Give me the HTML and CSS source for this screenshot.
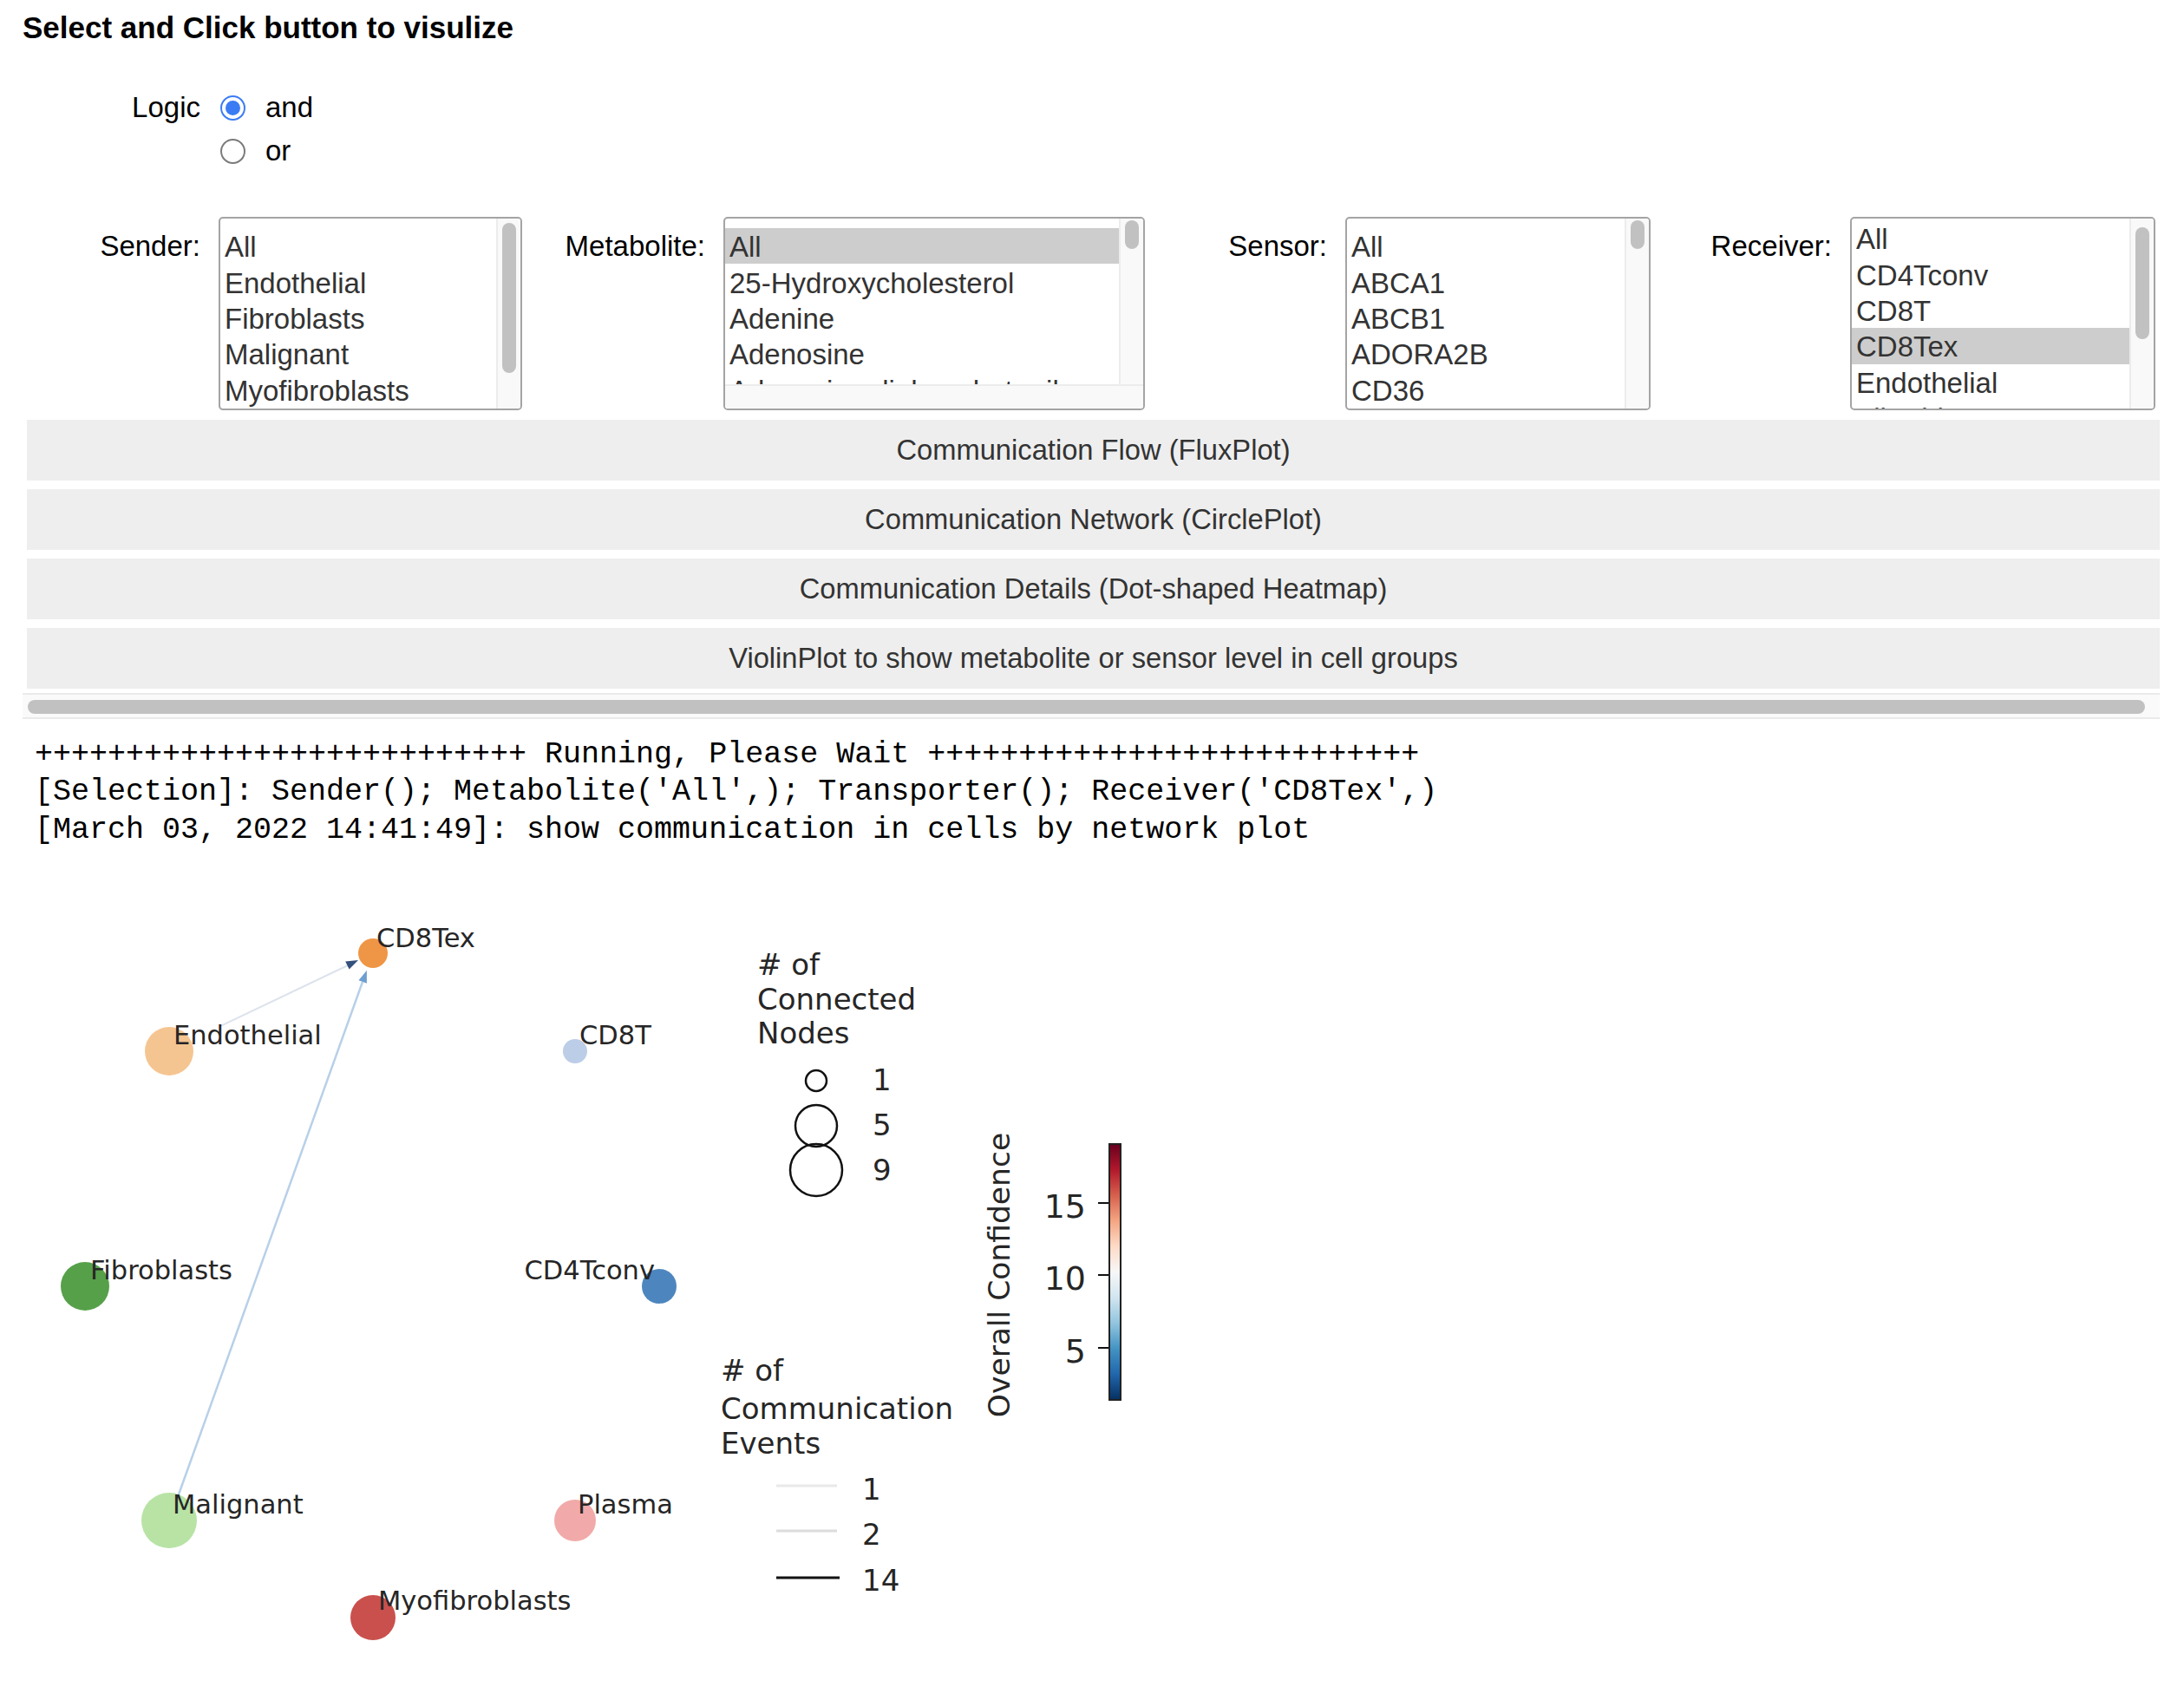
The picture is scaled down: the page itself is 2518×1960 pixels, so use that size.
FILE: index.html
```html
<!DOCTYPE html>
<html>
<head>
<meta charset="utf-8">
<link rel="stylesheet" href="styles.css">
</head>
<body>
<h1 class="title">Select and Click button to visulize</h1>

<div class="logic">
  <div class="logic-desc">Logic</div>
  <div class="options">
    <div class="opt"><span class="radio checked"><span class="dot"></span></span><span class="opt-text">and</span></div>
    <div class="opt"><span class="radio"></span><span class="opt-text">or</span></div>
  </div>
</div>

<div class="selects">
  <div class="group">
    <div class="glabel w1">Sender:</div>
    <div class="lb lb-sender">
      <div class="lb-main">
        <div class="lb-items">
          <div class="item">All</div>
          <div class="item">Endothelial</div>
          <div class="item">Fibroblasts</div>
          <div class="item">Malignant</div>
          <div class="item">Myofibroblasts</div>
          <div class="item">Plasma</div>
        </div>
        <div class="vbar"><div class="vthumb t-sender"></div></div>
      </div>
    </div>
  </div>
  <div class="group">
    <div class="glabel w2">Metabolite:</div>
    <div class="lb lb-metab">
      <div class="lb-main">
        <div class="lb-items">
          <div class="item sel">All</div>
          <div class="item">25-Hydroxycholesterol</div>
          <div class="item">Adenine</div>
          <div class="item">Adenosine</div>
          <div class="item">Adenosine diphosphate ribose</div>
        </div>
        <div class="vbar"><div class="vthumb t-short"></div></div>
      </div>
      <div class="hbar"></div>
    </div>
  </div>
  <div class="group">
    <div class="glabel w3">Sensor:</div>
    <div class="lb lb-sensor">
      <div class="lb-main">
        <div class="lb-items">
          <div class="item">All</div>
          <div class="item">ABCA1</div>
          <div class="item">ABCB1</div>
          <div class="item">ADORA2B</div>
          <div class="item">CD36</div>
          <div class="item">CD38</div>
        </div>
        <div class="vbar"><div class="vthumb t-short"></div></div>
      </div>
    </div>
  </div>
  <div class="group">
    <div class="glabel w4">Receiver:</div>
    <div class="lb lb-receiver">
      <div class="lb-main">
        <div class="lb-items scrolled">
          <div class="item">All</div>
          <div class="item">CD4Tconv</div>
          <div class="item">CD8T</div>
          <div class="item sel">CD8Tex</div>
          <div class="item">Endothelial</div>
          <div class="item">Fibroblasts</div>
        </div>
        <div class="vbar"><div class="vthumb t-receiver"></div></div>
      </div>
    </div>
  </div>
</div>

<div class="buttons">
  <div class="btn">Communication Flow (FluxPlot)</div>
  <div class="btn">Communication Network (CirclePlot)</div>
  <div class="btn">Communication Details (Dot-shaped Heatmap)</div>
  <div class="btn">ViolinPlot to show metabolite or sensor level in cell groups</div>
</div>

<div class="hscroll"><div class="hthumb"></div></div>

<pre class="out">+++++++++++++++++++++++++++ Running, Please Wait +++++++++++++++++++++++++++
[Selection]: Sender(); Metabolite('All',); Transporter(); Receiver('CD8Tex',)
[March 03, 2022 14:41:49]: show communication in cells by network plot</pre>

<svg class="plot" width="1400" height="920" viewBox="0 1040 1400 920" xmlns="http://www.w3.org/2000/svg">
  <defs>
    <linearGradient id="rdbu" x1="0" y1="1" x2="0" y2="0">
      <stop offset="0" stop-color="#053061"/>
      <stop offset="0.1" stop-color="#2166ac"/>
      <stop offset="0.2" stop-color="#4393c3"/>
      <stop offset="0.3" stop-color="#92c5de"/>
      <stop offset="0.4" stop-color="#d1e5f0"/>
      <stop offset="0.5" stop-color="#f7f7f7"/>
      <stop offset="0.6" stop-color="#fddbc7"/>
      <stop offset="0.7" stop-color="#f4a582"/>
      <stop offset="0.8" stop-color="#d6604d"/>
      <stop offset="0.9" stop-color="#b2182b"/>
      <stop offset="1" stop-color="#67001f"/>
    </linearGradient>
  </defs>

  <!-- edges -->
  <line x1="254" y1="1183" x2="401" y2="1113" stroke="#dde3ec" stroke-width="2"/>
  <polygon points="413,1107 402.6,1117.6 398.2,1108.6" fill="#34507c"/>
  <line x1="206" y1="1723" x2="418" y2="1132" stroke="#b8d0e8" stroke-width="2.5"/>
  <polygon points="422.9,1118.8 422.9,1133.7 413.5,1130.3" fill="#6f9fd0"/>

  <!-- nodes -->
  <g class="nodes">
    <circle cx="430" cy="1099" r="17" fill="#ef9646"/>
    <circle cx="195" cy="1212" r="28" fill="#f5c591"/>
    <circle cx="663" cy="1212" r="14" fill="#bccde8"/>
    <circle cx="98" cy="1483" r="28" fill="#56a049"/>
    <circle cx="760" cy="1483" r="20" fill="#4d86be"/>
    <circle cx="195" cy="1753" r="32" fill="#b8e3a5"/>
    <circle cx="663" cy="1753" r="24" fill="#f1aaa9"/>
    <circle cx="430" cy="1865" r="26" fill="#c9504d"/>
  </g>

  <!-- node labels -->
  <g class="nlabel">
    <text x="434" y="1092">CD8Tex</text>
    <text x="200" y="1204">Endothelial</text>
    <text x="668" y="1204">CD8T</text>
    <text x="104" y="1475">Fibroblasts</text>
    <text x="755" y="1475" text-anchor="end">CD4Tconv</text>
    <text x="199" y="1745">Malignant</text>
    <text x="666" y="1745">Plasma</text>
    <text x="436" y="1856">Myofibroblasts</text>
  </g>

  <!-- node size legend -->
  <g class="leg">
    <text x="873" y="1124"># of</text>
    <text x="873" y="1164">Connected</text>
    <text x="873" y="1203">Nodes</text>
    <text x="1006" y="1257">1</text>
    <text x="1006" y="1309">5</text>
    <text x="1006" y="1361">9</text>
  </g>
  <circle cx="941" cy="1246" r="12" fill="none" stroke="#111" stroke-width="2.5"/>
  <circle cx="941" cy="1298" r="24" fill="none" stroke="#111" stroke-width="2.5"/>
  <circle cx="941" cy="1349" r="30" fill="none" stroke="#111" stroke-width="2.5"/>

  <!-- edge legend -->
  <g class="leg">
    <text x="831" y="1592"># of</text>
    <text x="831" y="1636">Communication</text>
    <text x="831" y="1676">Events</text>
    <text x="994" y="1729">1</text>
    <text x="994" y="1781">2</text>
    <text x="994" y="1834">14</text>
  </g>
  <line x1="895" y1="1713" x2="965" y2="1713" stroke="#e9e9e9" stroke-width="3"/>
  <line x1="895" y1="1765" x2="965" y2="1765" stroke="#dcdcdc" stroke-width="3"/>
  <line x1="895" y1="1819" x2="968" y2="1819" stroke="#111" stroke-width="3"/>

  <!-- colorbar -->
  <rect x="1279" y="1319" width="13" height="295" fill="url(#rdbu)" stroke="#222" stroke-width="2"/>
  <line x1="1266" y1="1387" x2="1278" y2="1387" stroke="#111" stroke-width="2"/>
  <line x1="1266" y1="1470" x2="1278" y2="1470" stroke="#111" stroke-width="2"/>
  <line x1="1266" y1="1554" x2="1278" y2="1554" stroke="#111" stroke-width="2"/>
  <g class="ticks">
    <text x="1252" y="1404">15</text>
    <text x="1252" y="1487">10</text>
    <text x="1252" y="1571">5</text>
  </g>
  <text class="cbtitle" transform="translate(1164,1470) rotate(-90)">Overall Confidence</text>
</svg>
</body>
</html>
```

FILE: styles.css
```css
html, body {
  margin: 0;
  padding: 0;
  background: #ffffff;
  overflow: hidden;
}

body {
  font-family: "Liberation Sans", Arial, Helvetica, sans-serif;
  color: #000;
  width: 2518px;
  height: 1960px;
}

.title {
  margin: 0;
  padding: 12px 0 0 26px;
  font-size: 35px;
  line-height: 40px;
  font-weight: bold;
}

/* Logic radio group */
.logic {
  display: flex;
  margin-top: 47px;
}

.logic-desc {
  width: 231px;
  text-align: right;
  font-size: 33px;
  line-height: 50px;
}

.options {
  display: flex;
  flex-direction: column;
  margin-left: 23px;
}

.opt {
  display: flex;
  align-items: center;
  height: 50px;
  font-size: 33px;
}

.radio {
  box-sizing: border-box;
  width: 29px;
  height: 29px;
  border-radius: 50%;
  border: 2px solid #7b7b7b;
  display: flex;
  align-items: center;
  justify-content: center;
  background: #fff;
}

.radio.checked {
  border: 2.5px solid #3b7cf4;
}

.dot {
  width: 17px;
  height: 17px;
  border-radius: 50%;
  background: #3b7cf4;
}

.opt-text {
  margin-left: 23px;
  line-height: 50px;
}

/* select multiple row */
.selects {
  display: flex;
  margin-top: 51px;
  padding-left: 26px;
}

.group {
  display: flex;
}

.glabel {
  box-sizing: border-box;
  text-align: right;
  font-size: 33px;
  padding-top: 16.2px;
  line-height: 36.8px;
  margin-right: 20px;
  padding-right: 1px;
}

.w1 { width: 206px; }
.w2 { width: 212px; }
.w3 { width: 211px; }
.w4 { width: 210px; }

.lb {
  box-sizing: border-box;
  height: 223px;
  border: 2px solid #a4a4a4;
  border-radius: 5px;
  overflow: hidden;
  display: flex;
  flex-direction: column;
  background: #fff;
}

.lb-sender { width: 350px; }
.lb-metab { width: 486px; }
.lb-sensor { width: 352px; }
.lb-receiver { width: 352px; }

.lb-main {
  flex: 1;
  display: flex;
  min-height: 0;
}

.lb-items {
  flex: 1;
  padding-top: 11px;
  overflow: hidden;
}

.lb-items.scrolled {
  padding-top: 2px;
}

.item {
  box-sizing: border-box;
  height: 41.4px;
  padding: 4.2px 0 0 5px;
  line-height: 36.8px;
  font-size: 33px;
  color: #333;
  white-space: nowrap;
}

.item.sel {
  background: #cdcdcd;
}

.vbar {
  box-sizing: border-box;
  width: 28px;
  background: #f9f9f9;
  border-left: 2px solid #ececec;
  display: flex;
  flex-direction: column;
  align-items: center;
}

.vthumb {
  width: 16px;
  border-radius: 8px;
  background: #c1c1c1;
}

.t-sender { margin-top: 5px; height: 173px; }
.t-short { margin-top: 2px; height: 33px; }
.t-receiver { margin-top: 10px; height: 129px; }

.hbar {
  box-sizing: border-box;
  height: 28px;
  background: #f9f9f9;
  border-top: 2px solid #ececec;
}

/* buttons */
.buttons {
  margin-top: 11px;
  padding-left: 31px;
}

.btn {
  width: 2459px;
  height: 70px;
  margin-bottom: 10px;
  background: #eeeeee;
  display: flex;
  align-items: center;
  justify-content: center;
  font-size: 32.7px;
  color: #333;
}

.btn:last-child {
  margin-bottom: 0;
}

/* horizontal scrollbar of output area */
.hscroll {
  box-sizing: border-box;
  margin: 5px 0 0 26px;
  width: 2464px;
  height: 30px;
  border-top: 2px solid #eaeaea;
  border-bottom: 2px solid #eaeaea;
  background: #fafafa;
  padding: 6px 0 0 6px;
}

.hthumb {
  width: 2441px;
  height: 16px;
  border-radius: 8px;
  background: #c1c1c1;
}

/* text output */
.out {
  margin: 20px 0 0 40px;
  font-family: "Liberation Mono", "Courier New", monospace;
  font-size: 35px;
  line-height: 43.3px;
  color: #000;
  white-space: pre;
}

/* plot */
.plot {
  display: block;
  margin-top: 61px;
}

.nlabel text {
  font-family: "DejaVu Sans", sans-serif;
  font-size: 30.5px;
  fill: #262626;
}

.leg text {
  font-family: "DejaVu Sans", sans-serif;
  font-size: 34px;
  fill: #262626;
}

.ticks text {
  font-family: "DejaVu Sans", sans-serif;
  font-size: 38px;
  fill: #262626;
  text-anchor: end;
}

.cbtitle {
  font-family: "DejaVu Sans", sans-serif;
  font-size: 34.5px;
  fill: #262626;
  text-anchor: middle;
}
```
